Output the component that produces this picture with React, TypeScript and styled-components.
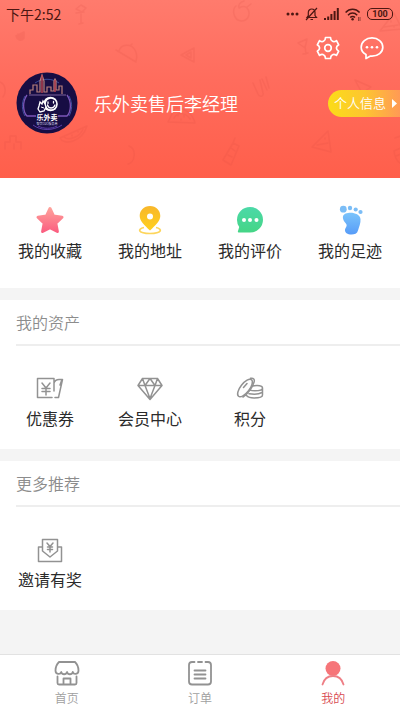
import React from "react";
import styled, { createGlobalStyle } from "styled-components";

const GlobalStyle = createGlobalStyle`
  *, *::before, *::after { box-sizing: border-box; }
  html, body, #root { height: 100%; }
  body {
    margin: 0;
    background: #f4f4f4;
    color: #2b2b2b;
    font-family: "Noto Sans CJK SC", "Noto Sans", sans-serif;
  }
  button { border: 0; padding: 0; background: none; font: inherit; color: inherit; cursor: pointer; }
  a { color: inherit; text-decoration: none; }
  h1, h2 { margin: 0; font-weight: 400; }
  svg { display: block; }
`;

const Page = styled.div`
  min-height: 100%;
  display: flex;
  flex-direction: column;
`;

const Header = styled.header`
  position: relative;
  padding-bottom: 44px;
  background: linear-gradient(180deg, #ff7b6d 0%, #ff6c5d 45%, #ff5f4b 100%);
  color: #fff;
`;

const Doodles = styled.svg`
  position: absolute;
  inset: 0;
  width: 100%;
  height: 100%;
  fill: none;
  stroke: #d84a40;
  stroke-width: 1.5;
  stroke-linecap: round;
  stroke-linejoin: round;
  opacity: 0.15;
`;

const HeaderRow = styled.div`
  position: relative;
  display: flex;
  align-items: center;
`;

const StatusBar = styled(HeaderRow)`
  height: 28px;
  padding: 0 7px 0 6px;
  justify-content: space-between;
  color: #4c1712;
  font-size: 14px;
  line-height: 20px;
`;

const StatusIcons = styled.div`
  display: flex;
  align-items: center;
  gap: 6px;
`;

const Battery = styled.span`
  width: 26px;
  height: 12px;
  border: 1px solid #4c1712;
  border-radius: 5px;
  font: 700 9px/10px Roboto, sans-serif;
  text-align: center;
`;

const Actions = styled(HeaderRow)`
  height: 40px;
  padding: 0 16px;
  justify-content: flex-end;
  gap: 20px;
`;

const Profile = styled(HeaderRow)`
  margin-top: 4px;
  padding-left: 16px;
  gap: 16px;
`;

const Name = styled.h1`
  flex: 1;
  font-size: 18px;
  font-weight: 350;
  line-height: 26px;
  white-space: nowrap;
`;

const InfoButton = styled.button`
  display: flex;
  align-items: center;
  gap: 6px;
  height: 27px;
  padding: 0 3px 0 6px;
  border-radius: 14px 0 0 14px;
  background: linear-gradient(90deg, #fbdc18 0%, #fdc630 50%, #ff9a55 100%);
  color: #fff;
  font-size: 13px;
  font-weight: 350;
  line-height: 20px;
  white-space: nowrap;
`;

const Main = styled.main`
  flex: 1;
  display: flex;
  flex-direction: column;
  gap: 12px;
`;

const Section = styled.section`
  background: #fff;
`;

const SectionTitle = styled.h2`
  margin-left: 16px;
  padding: 10px 0;
  border-bottom: 2px solid #eee;
  color: #8c8c8c;
  font-size: 16px;
  font-weight: 350;
  line-height: 24px;
`;

const Grid = styled.div`
  display: grid;
  grid-template-columns: repeat(4, 1fr);
  padding: 27px 0 26px;
`;

const AssetsGrid = styled(Grid)`
  padding: 27px 0 19px;
`;

const Entry = styled.button`
  display: flex;
  flex-direction: column;
  align-items: center;
  gap: 3px;
  font-size: 16px;
  line-height: 24px;
  white-space: nowrap;
`;

const TabBar = styled.nav`
  position: sticky;
  bottom: 0;
  display: grid;
  grid-template-columns: repeat(3, 1fr);
  padding: 5px 0 4px;
  border-top: 1px solid #e2e2e2;
  background: #fff;
`;

const Tab = styled.a<{ $active?: boolean }>`
  display: flex;
  flex-direction: column;
  align-items: center;
  gap: 3px;
  color: ${(p) => (p.$active ? "#d84a50" : "#a0a0a0")};
  font-size: 12px;
  font-weight: 350;
  line-height: 18px;
`;

const LineIcon = styled.svg`
  fill: none;
  stroke: #929292;
  stroke-width: 1.5;
  stroke-linecap: round;
  stroke-linejoin: round;
`;

const HeaderDoodles = () => (
  <Doodles viewBox="0 0 400 178" preserveAspectRatio="xMidYMid slice" aria-hidden="true">
    <path d="M76 9l5-4 5 3-4 4zM76 13l8-1M81 14v9M79 24l4-1" />
    <path d="M16 36l8-4 0 6c-3 4-7 2-8-2zM18 34l5 4" fill="#d84a40" />
    <path d="M116 50l20 12M119 51c2-7 12-8 16-1 2 4 2 8 1 11M130 46l2-2" />
    <path d="M181 55l13-7v14zM186 55l5-3v6z" />
    <path d="M236 6c-4 3-3 14 5 15 8 0 10-8 6-13-3-3-6-1-8 0-1-3 1-6 5-7M247 7l4-3" />
    <path d="M298 43l9-4-2 9zM305 46l1 8M303 54l5-1" />
    <path d="M380 31l14-18 8 16zM384 27l14-2M391 21v1M394 26v1" />
    <path d="M253 83l5 11c2 4 6 2 5-1l-3-13M262 79l5 11M266 77l3 11" />
    <path d="M355 80l16 7-9 6zM364 93l-3 7" />
    <path d="M168 122l7-14c9-1 18 6 20 15zM174 118c4-7 12-5 16 1M178 114v2M184 115v2M181 119v1" />
    <path d="M60 138c4 8 22 4 27-12M64 137c5 4 16 0 19-8M60 138l27-12M72 135v1M78 131v1" />
    <path d="M5 149v-7h5v-6h6v6h5v7M14 149v-5" />
    <path d="M312 147l16-16 3 21zM317 145l11-2M325 138v1" />
    <path d="M223 160l10-17 6 3-8 19zM231 148l4 3M233 143l2-5M228 155l4 2" />
    <path d="M129 146c8 3 6 17-1 18M395 138l8-3M394 151c1 8 5 12 8 13M394 151l7-3M396 156l5-2" />
    <path d="M0 82c5 2 7 9 3 15" />
  </Doodles>
);

const MutedBell = () => (
  <svg width="13" height="14" viewBox="0 0 13 14" fill="none" stroke="currentColor" strokeWidth="1.2" aria-label="静音">
    <path d="M2 10.500h9.500l-1.500-2V5.500C10 3.500 8.600 2 6.700 2S3.300 3.500 3.300 5.500v3zM5.500 12.500h2.500M1 13L12 1" />
  </svg>
);

const Signal = () => (
  <svg width="15" height="12" viewBox="0 0 15 12" fill="currentColor" aria-label="信号">
    <path d="M0 10h2v2H0zM3.200 8.500h2V12h-2zM6.400 6h2v6h-2zM9.600 3h2v9h-2zM12.800 0h2v12h-2z" />
  </svg>
);

const Wifi = () => (
  <svg width="16" height="13" viewBox="0 0 16 13" fill="none" stroke="currentColor" strokeWidth="1.500" aria-label="无线网络">
    <path d="M.6 4.500c4-4.200 10-4.200 14 0M3 7.200c2.700-2.800 6.500-2.800 9.200 0M5.200 9.600c1.400-1.500 3.400-1.500 4.800 0" />
    <circle cx="7.600" cy="11.300" r="1.200" fill="currentColor" stroke="none" />
    <path d="M13.500 9v4M15 9v4" strokeWidth="1" opacity=".6" />
  </svg>
);

const Gear = () => (
  <svg width="24" height="24" viewBox="0 0 24 24" fill="none" stroke="#fff" strokeWidth="1.700" strokeLinejoin="round">
    <path d="M9.500 1.500h5c0 2 .8 3.200 2 3.800 1.300.7 2.500.4 4-.7l2.200 4.200c-1.700 1-2.300 2-2.300 3.200s.6 2.200 2.300 3.200l-2.200 4.200c-1.500-1.100-2.700-1.400-4-.7-1.200.6-2 1.800-2 3.800h-5c0-2-.8-3.200-2-3.800-1.300-.7-2.500-.4-4 .7l-2.200-4.200c1.700-1 2.300-2 2.300-3.200S3 9.800 1.300 8.800l2.200-4.200c1.500 1.100 2.700 1.400 4 .7 1.200-.6 2-1.800 2-3.800z" />
    <circle cx="12" cy="12" r="3.300" />
  </svg>
);

const Chat = () => (
  <svg width="24" height="24" viewBox="0 0 24 24" fill="none" stroke="#fff" strokeWidth="1.700" strokeLinejoin="round">
    <path d="M6 22.500v-4C3 17 1.200 14.300 1.200 11.200c0-5.200 4.800-9.300 10.800-9.300s10.800 4.100 10.800 9.300-4.800 9-10.800 9l-1.500-.1z" />
    <g fill="#fff" stroke="none"><circle cx="7" cy="11.300" r="1.300" /><circle cx="12" cy="11.300" r="1.300" /><circle cx="17" cy="11.300" r="1.300" /></g>
  </svg>
);

const Avatar = () => (
  <svg width="62" height="62" viewBox="0 0 62 62" fill="none" aria-label="乐外卖">
    <circle cx="31" cy="31" r="30.500" fill="#170d43" />
    <path d="M11 23C6 30 7 40 11 44h9M51 23c5 7 4 17 0 21h-9" stroke="#7c55b8" strokeWidth="1.300" />
    <path d="M9 24C5 31 6 39 9 44M53 24c4 7 3 15 0 20M19 11c7-5 17-5 24 0" stroke="#3b4c9a" />
    <path d="M17 53c8 6 20 6 29 0M22 54c6 3 13 3 19 0" stroke="#5c3ea6" />
    <path d="M14 22v-4h3v-5h4v7h3V9l2-6 2 6v11h3v-5h4v4h3V9l1-2 1 2v9h3v-4h3v8" stroke="#b9827d" strokeWidth="1.200" />
    <path d="M26 3v18M39 8v12" stroke="#b5424f" strokeWidth="1.500" />
    <path d="M13 23h37" stroke="#7d629d" />
    <circle cx="34.500" cy="32" r="7.300" fill="#fff" />
    <circle cx="35" cy="32" r="5.200" fill="#170d43" />
    <path d="M31.500 33c1 4 6 4 7.500 0M32 30v1.500M37.500 29.500V31" stroke="#fff" strokeWidth="1.300" strokeLinecap="round" />
    <path d="M23 34l1-4 2 2 1-3 2 3 1 3-2 4-4 1-2-3z" fill="#170d43" stroke="#fff" strokeWidth="1.300" />
    <path d="M25 35l3 1" stroke="#fff" />
    <text x="31" y="48" textAnchor="middle" fill="#fff" fontSize="7" fontWeight="700">乐外卖</text>
    <text x="31" y="53" textAnchor="middle" fill="#d5cfea" fontSize="3">餐饮O2O服务商</text>
  </svg>
);

const Arrow = () => (
  <svg width="5" height="9" viewBox="0 0 5 9" fill="#fff" aria-hidden="true"><path d="M0 0l5 4.500L0 9z" /></svg>
);

const Star = () => (
  <svg width="30" height="30" viewBox="0 0 30 30">
    <defs><linearGradient id="star" x2="0" y2="1"><stop stopColor="#fea09a" /><stop offset="1" stopColor="#fb6081" /></linearGradient></defs>
    <path d="M15 3.500l3.600 7.600 8.400 1.100-6.200 5.900 1.600 8.400L15 22.600l-7.400 3.900 1.600-8.400L3 12.200l8.400-1.100z" fill="url(#star)" stroke="url(#star)" strokeWidth="3" strokeLinejoin="round" />
  </svg>
);

const Pin = () => (
  <svg width="30" height="30" viewBox="0 0 30 30">
    <defs><linearGradient id="pin" x2="0" y2="1"><stop stopColor="#f8b72c" /><stop offset="1" stopColor="#ffd01c" /></linearGradient></defs>
    <path d="M9 22.500c-7 1.500-6 6 6 6s13-4.500 6-6" fill="none" stroke="#fdd55b" strokeWidth="1.700" />
    <path fillRule="evenodd" d="M15 1C8.800 1 4.700 5.500 4.700 11c0 5 5 9.500 10.300 14.500C20.300 20.500 25.300 16 25.300 11 25.300 5.500 21.200 1 15 1zm0 7.500a3 3 0 1 1 0 6 3 3 0 0 1 0-6z" fill="url(#pin)" />
  </svg>
);

const Bubble = () => (
  <svg width="30" height="30" viewBox="0 0 30 30">
    <defs><linearGradient id="bubble" x2="0" y2="1"><stop stopColor="#4cd9a8" /><stop offset="1" stopColor="#45d586" /></linearGradient></defs>
    <path d="M15 2a13 12.800 0 1 1 0 25.600H4c-1 0-1.400-.8-1-1.600l1.200-4A13 12.800 0 0 1 2 14.800 13 12.800 0 0 1 15 2z" fill="url(#bubble)" />
    <g fill="#fff"><circle cx="9" cy="15" r="2" /><circle cx="15" cy="15" r="2" /><circle cx="21.500" cy="15" r="2" /></g>
  </svg>
);

const Foot = () => (
  <svg width="30" height="30" viewBox="0 0 30 30">
    <defs><linearGradient id="foot" x2="0" y2="1"><stop stopColor="#7bc4fb" /><stop offset="1" stopColor="#579cf8" /></linearGradient></defs>
    <g fill="#7bbdf6"><circle cx="8.300" cy="4.200" r="3.400" /><circle cx="15" cy="3" r="2.200" /><circle cx="20.700" cy="4.500" r="2.100" /><circle cx="25.500" cy="7" r="2.100" /></g>
    <path d="M13 8c5-1 12 1 12.500 6 .4 4-1.500 8-2.500 11.500-.8 3-3.500 4-6.500 4-4 0-7-2-6.500-5 .3-2 2.300-3 1.500-5-.7-2-3-3-3.500-6C7.500 10 9.500 8.500 13 8z" fill="url(#foot)" />
  </svg>
);

const Coupon = () => (
  <LineIcon width="30" height="30" viewBox="0 0 30 30">
    <path d="M17 24.500H2.500v-19H19V18M19 10c1-3 3-3.500 5-3.500h3.500l-4 18H20M25 12l2-5.500M7 10l4 5 4-5M11 15v7M7 15.500h8M7 18.500h8" />
  </LineIcon>
);

const Diamond = () => (
  <LineIcon width="30" height="30" viewBox="0 0 30 30">
    <path d="M7.500 5.500h15l4.500 7L15 26.500 3 12.500zM3 12.500h24M10 12.500l5 13 5-13M7.500 5.500l2.500 7 5-7 5 7 2.500-7" />
  </LineIcon>
);

const Coins = () => (
  <LineIcon width="30" height="30" viewBox="0 0 30 30">
    <ellipse cx="10" cy="15" rx="4.500" ry="10.500" transform="rotate(38 10 15)" />
    <path d="M15.500 5.300c3-.6 4.500 1 3.500 4-1.500 5-6 11.500-11 14.700M18 13c5-1 9.500-.2 9.500 2s-3.500 2.800-7.500 2.800c-2.500 0-4-.3-5-1M27.500 15v7c0 2-4 3-8.500 3-3.500 0-6-.8-7.500-2.500M27 19.500c-3 1.700-8 2-13 1.200M8.500 14.500l3.500-4" />
  </LineIcon>
);

const Envelope = () => (
  <LineIcon width="30" height="30" viewBox="0 0 30 30">
    <path d="M7.500 17V5.500h15V17L15 23zM7.500 13h-4v14.500h23V13h-4M12 9l3 3.500L18 9M15 12.500V18M12.500 13h5M12.500 15.500h5" />
  </LineIcon>
);

const Shop = () => (
  <svg width="26" height="26" viewBox="0 0 26 26" fill="none" stroke="#929292" strokeWidth="1.800" strokeLinecap="round" strokeLinejoin="round">
    <path d="M5 2h16c2 2 3.500 5.500 3.500 8.500 0 4-5 4.500-5.700 1.500-.8 3-5 3-5.800 0-.8 3-5 3-5.800 0-.8 3-5.700 2.500-5.700-1.500C1.500 7.500 3 4 5 2zM3.500 16.500V23c0 1 .5 1.500 1.500 1.500h16c1 0 1.500-.5 1.500-1.500v-6.500M9.500 24.500v-6h7v6" />
  </svg>
);

const Order = () => (
  <svg width="26" height="26" viewBox="0 0 26 26" fill="none" stroke="#929292" strokeWidth="1.800" strokeLinecap="round">
    <path d="M7.500 2H5C3 2 2 3 2 5v16.500c0 2 1 3 3 3h16c2 0 3-1 3-3V5c0-2-1-3-3-3h-2.500M11 2h4M7.500 10.500h11M7.500 14.500h11M7.500 18.500h11" />
  </svg>
);

const Person = () => (
  <svg width="26" height="26" viewBox="0 0 26 26" fill="none">
    <circle cx="13" cy="8.500" r="7.500" fill="#f67579" />
    <path d="M2.500 24.500C4 19 8 16 13 16s9 3 10.500 8.500" stroke="#ee7f86" strokeWidth="1.800" strokeLinecap="round" />
  </svg>
);

const shortcuts = [
  { label: "我的收藏", Icon: Star },
  { label: "我的地址", Icon: Pin },
  { label: "我的评价", Icon: Bubble },
  { label: "我的足迹", Icon: Foot },
];

const assets = [
  { label: "优惠券", Icon: Coupon },
  { label: "会员中心", Icon: Diamond },
  { label: "积分", Icon: Coins },
];

const more = [{ label: "邀请有奖", Icon: Envelope }];

type Item = { label: string; Icon: React.ComponentType };

const Entries = ({ items }: { items: Item[] }) => (
  <>
    {items.map(({ label, Icon }) => (
      <Entry key={label} type="button">
        <Icon />
        {label}
      </Entry>
    ))}
  </>
);

export default function App() {
  return (
    <Page>
      <GlobalStyle />
      <Header>
        <HeaderDoodles />
        <StatusBar>
          <span>下午2:52</span>
          <StatusIcons>
            <svg width="13" height="4" viewBox="0 0 13 4" fill="currentColor" aria-hidden="true">
              <circle cx="2" cy="2" r="1.500" /><circle cx="6.500" cy="2" r="1.500" /><circle cx="11" cy="2" r="1.500" />
            </svg>
            <MutedBell />
            <Signal />
            <Wifi />
            <Battery>100</Battery>
          </StatusIcons>
        </StatusBar>
        <Actions>
          <button type="button" aria-label="设置"><Gear /></button>
          <button type="button" aria-label="消息"><Chat /></button>
        </Actions>
        <Profile>
          <Avatar />
          <Name>乐外卖售后李经理</Name>
          <InfoButton type="button">个人信息<Arrow /></InfoButton>
        </Profile>
      </Header>
      <Main>
        <Section>
          <Grid>
            <Entries items={shortcuts} />
          </Grid>
        </Section>
        <Section>
          <SectionTitle>我的资产</SectionTitle>
          <AssetsGrid>
            <Entries items={assets} />
          </AssetsGrid>
        </Section>
        <Section>
          <SectionTitle>更多推荐</SectionTitle>
          <AssetsGrid>
            <Entries items={more} />
          </AssetsGrid>
        </Section>
      </Main>
      <TabBar>
        <Tab href="#home"><Shop />首页</Tab>
        <Tab href="#orders"><Order />订单</Tab>
        <Tab href="#mine" $active aria-current="page"><Person />我的</Tab>
      </TabBar>
    </Page>
  );
}
